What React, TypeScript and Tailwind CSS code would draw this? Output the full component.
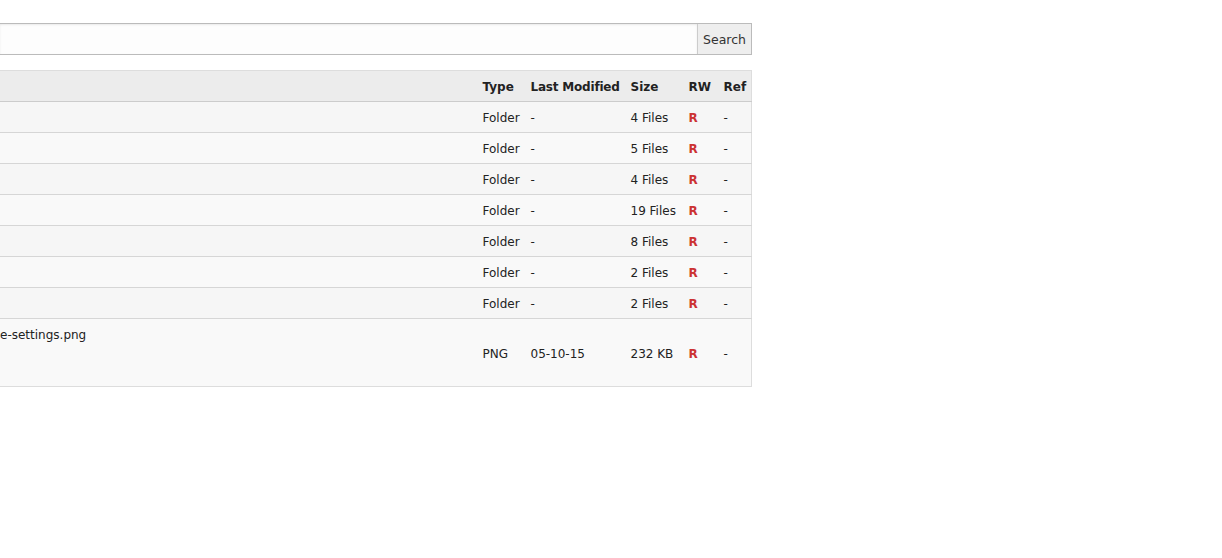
import React from 'react';

type Row = {
  name: string;
  type: string;
  modified: string;
  size: string;
};

const rows: Row[] = [
  { name: '', type: 'Folder', modified: '-', size: '4 Files' },
  { name: '', type: 'Folder', modified: '-', size: '5 Files' },
  { name: '', type: 'Folder', modified: '-', size: '4 Files' },
  { name: '', type: 'Folder', modified: '-', size: '19 Files' },
  { name: '', type: 'Folder', modified: '-', size: '8 Files' },
  { name: '', type: 'Folder', modified: '-', size: '2 Files' },
  { name: '', type: 'Folder', modified: '-', size: '2 Files' },
];

const SearchBar: React.FC = () => (
  <div className="flex h-[32px] w-[752px] border border-l-0 border-[#bbbbbb]">
    <input
      type="text"
      className="flex-1 bg-[#fdfdfd] shadow-[inset_0_1px_2px_rgba(0,0,0,0.08)] outline-none px-2"
    />
    <button className="w-[54px] pt-[2px] bg-[#eeeeee] border-l border-[#cccccc] text-[12.5px] text-[#333]">
      Search
    </button>
  </div>
);

const App: React.FC = () => {
  return (
    <div
      className="w-[1222px] h-[558px] bg-white text-[#222] text-[12px]"
      style={{ fontFamily: '"DejaVu Sans", Verdana, sans-serif' }}
    >
      <div className="pt-[23px]">
        <SearchBar />
      </div>
      <div className="mt-[15px] w-[752px]">
        <table className="w-full table-fixed border-collapse border-r border-b border-t border-[#dddddd]">
          <colgroup>
            <col />
            <col className="w-[48px]" />
            <col className="w-[100px]" />
            <col className="w-[58px]" />
            <col className="w-[35px]" />
            <col className="w-[32px]" />
          </colgroup>
          <thead>
            <tr className="h-[31px] bg-[#ececec] border-b border-[#cccccc] text-left">
              <th></th>
              <th className="pl-[4px] pt-[2px] font-bold">Type</th>
              <th className="pl-[4px] pt-[2px] font-bold whitespace-nowrap tracking-[-0.2px]">Last Modified</th>
              <th className="pl-[4px] pt-[2px] font-bold">Size</th>
              <th className="pl-[4px] pt-[2px] font-bold">RW</th>
              <th className="pl-[4px] pt-[2px] font-bold">Ref</th>
            </tr>
          </thead>
          <tbody>
            {rows.map((r, i) => (
              <tr
                key={i}
                className={`h-[31px] border-b border-[#d6d6d6] ${i % 2 === 0 ? 'bg-[#f6f6f6]' : 'bg-[#f9f9f9]'}`}
              >
                <td>{r.name}</td>
                <td className="pl-[4px] pt-[2px]">{r.type}</td>
                <td className="pl-[4px] pt-[2px]">{r.modified}</td>
                <td className="pl-[4px] pt-[2px] whitespace-nowrap">{r.size}</td>
                <td className="pl-[4px] pt-[2px] font-bold text-[#cc3333]">R</td>
                <td className="pl-[4px] pt-[2px]">-</td>
              </tr>
            ))}
            <tr className="h-[68px] bg-[#f9f9f9]">
              <td className="align-top pt-[7px]">e-settings.png</td>
              <td className="pl-[4px] pt-[3px]">PNG</td>
              <td className="pl-[4px] pt-[3px]">05-10-15</td>
              <td className="pl-[4px] pt-[3px] whitespace-nowrap">232 KB</td>
              <td className="pl-[4px] pt-[3px] font-bold text-[#cc3333]">R</td>
              <td className="pl-[4px] pt-[3px]">-</td>
            </tr>
          </tbody>
        </table>
      </div>
    </div>
  );
};

export default App;
